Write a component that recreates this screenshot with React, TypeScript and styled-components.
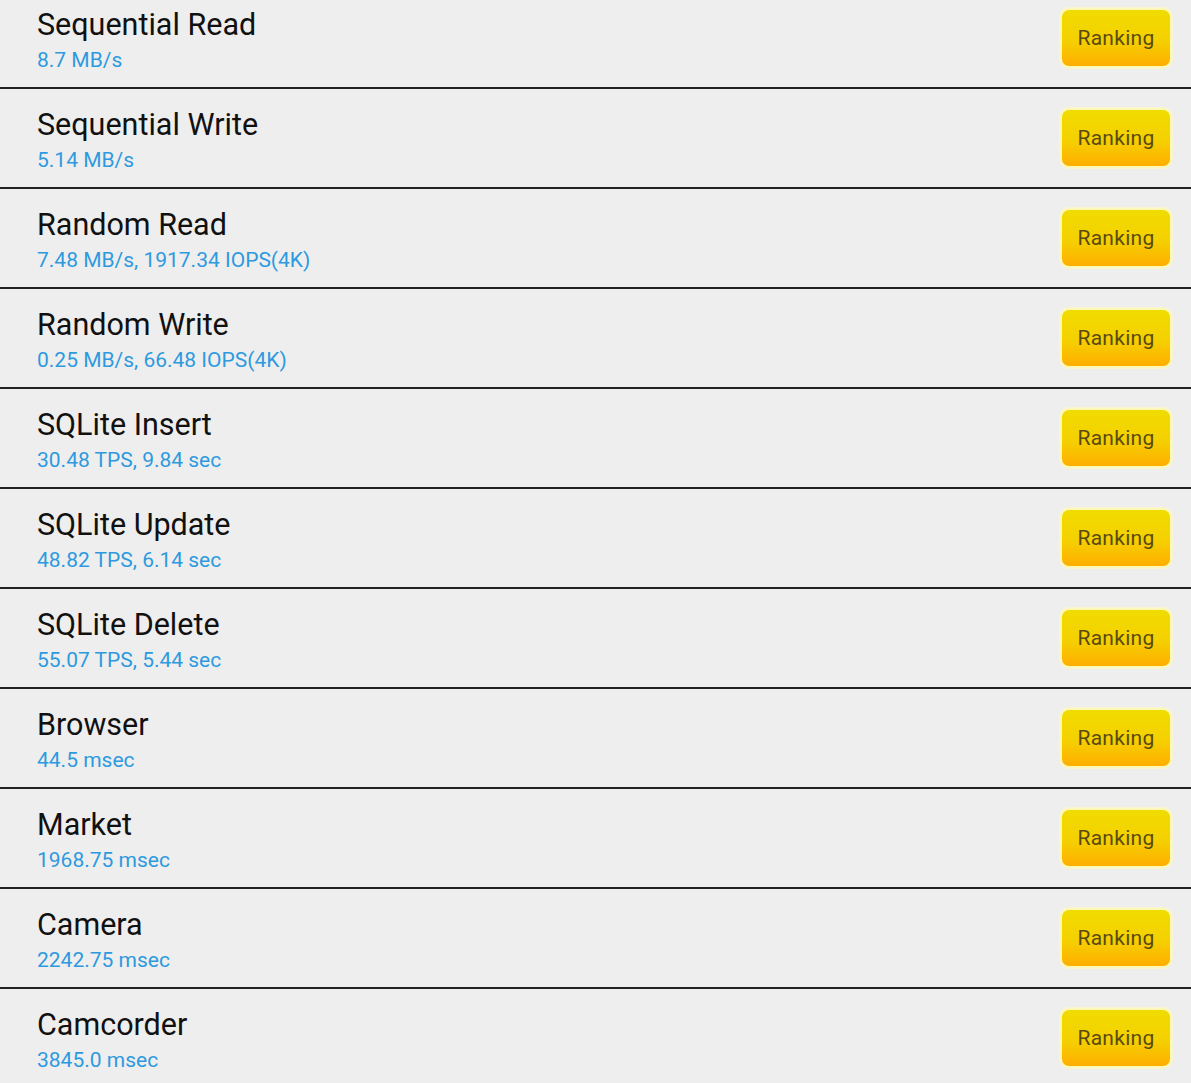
import styled, { createGlobalStyle } from "styled-components";

const GlobalStyle = createGlobalStyle`
  html, body { margin: 0; padding: 0; background: #eeeeee; }
  body { font-family: Roboto, "Noto Sans", sans-serif; overflow: hidden; }
`;

const List = styled.div`
  display: flex;
  flex-direction: column;
  margin-top: -11px;
`;

const Row = styled.div`
  display: flex;
  align-items: center;
  justify-content: space-between;
  height: 98px;
  padding: 0 19px 0 37px;
  border-bottom: 2px solid #222222;
  background: #eeeeee;
`;

const Texts = styled.div`
  display: flex;
  flex-direction: column;
  padding-top: 3px;
`;

const Title = styled.div`
  font-size: 30.5px;
  color: #111111;
  line-height: 36px;
`;

const Value = styled.div`
  font-size: 21px;
  color: #2d9ae0;
  line-height: 26px;
  margin-top: 4px;
`;

const RankButton = styled.button`
  width: 112px;
  height: 60px;
  border-radius: 9px;
  border: 2px solid #fdf8b8;
  box-shadow: 0 0 1px 1px rgba(255, 250, 190, 0.7);
  background: linear-gradient(to bottom, #f0dc00 0%, #f5d000 55%, #ffae00 100%);
  color: #5a4a12;
  font-family: Roboto, "Noto Sans", sans-serif;
  font-size: 21px;
  letter-spacing: 0.3px;
  cursor: pointer;
  padding: 0;
`;

const results = [
  { name: "Sequential Read", value: "8.7 MB/s" },
  { name: "Sequential Write", value: "5.14 MB/s" },
  { name: "Random Read", value: "7.48 MB/s, 1917.34 IOPS(4K)" },
  { name: "Random Write", value: "0.25 MB/s, 66.48 IOPS(4K)" },
  { name: "SQLite Insert", value: "30.48 TPS, 9.84 sec" },
  { name: "SQLite Update", value: "48.82 TPS, 6.14 sec" },
  { name: "SQLite Delete", value: "55.07 TPS, 5.44 sec" },
  { name: "Browser", value: "44.5 msec" },
  { name: "Market", value: "1968.75 msec" },
  { name: "Camera", value: "2242.75 msec" },
  { name: "Camcorder", value: "3845.0 msec" },
];

export default function App() {
  return (
    <>
      <GlobalStyle />
      <List>
        {results.map((r) => (
          <Row key={r.name}>
            <Texts>
              <Title>{r.name}</Title>
              <Value>{r.value}</Value>
            </Texts>
            <RankButton>Ranking</RankButton>
          </Row>
        ))}
      </List>
    </>
  );
}
